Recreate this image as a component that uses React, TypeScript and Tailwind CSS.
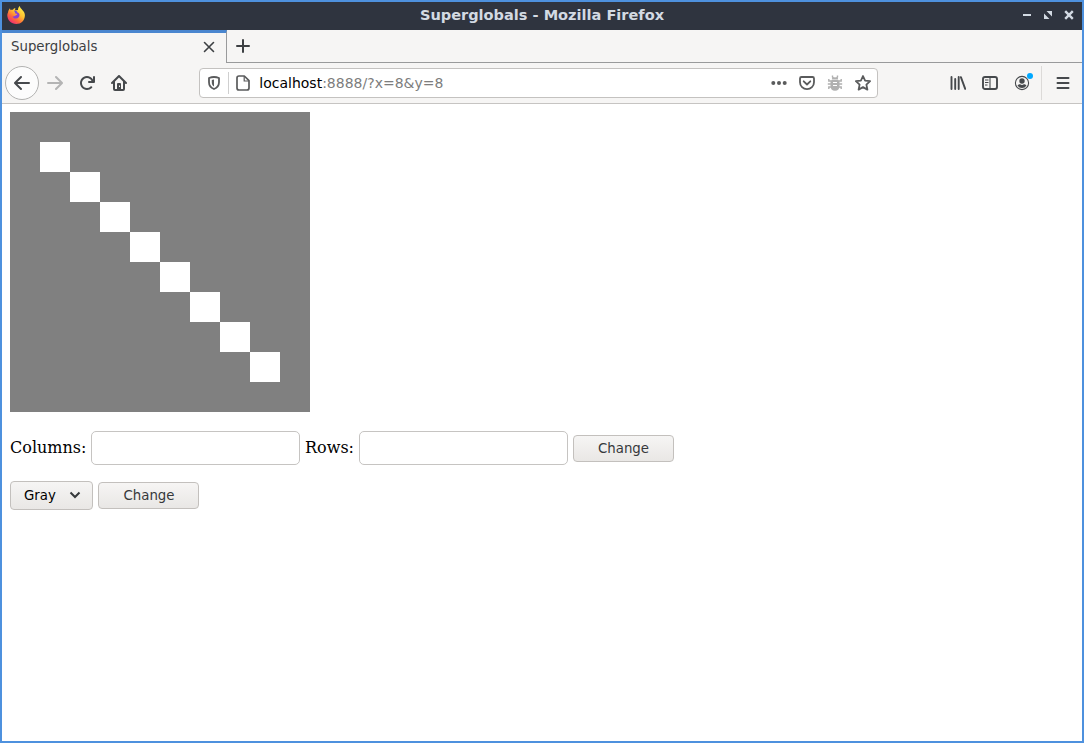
import type { ReactNode } from "react";

function Icon({ children, className = "" }: { children: ReactNode; className?: string }) {
  return (
    <svg viewBox="0 0 16 16" className={`h-4 w-4 shrink-0 ${className}`} fill="currentColor">
      {children}
    </svg>
  );
}

const ARROW =
  "M15 7H3.414l4.293-4.293a1 1 0 0 0-1.414-1.414l-6 6a1 1 0 0 0 0 1.414l6 6a1 1 0 0 0 1.414-1.414L3.414 9H15a1 1 0 0 0 0-2z";

function FirefoxLogo() {
  return (
    <svg viewBox="0 0 18 18" className="h-[18px] w-[18px]">
      <defs>
        <linearGradient id="flame" x1="0.85" y1="0.05" x2="0.2" y2="0.95">
          <stop offset="0" stopColor="#fff04a" />
          <stop offset="0.4" stopColor="#ffc030" />
          <stop offset="0.7" stopColor="#ff6a3a" />
          <stop offset="1" stopColor="#ee2a78" />
        </linearGradient>
      </defs>
      <path
        d="M1 6.400C1.300 4.500 2.200 3.200 3 2.300c0 .9.200 1.400.6 1.800C4.400 3.700 5.300 3.600 6 3.700 6.600 2.700 7.400 2.200 8.400 2c-.5.8-.5 1.500 0 2.200L11 4C10.900 2.300 11.700 1 12.800 0c.2 1.800 1.600 2.600 2.500 3.900C17 5.600 18 7.300 17.900 9.500 17.700 14.500 14 18 9.300 18 4.200 18 .4 14.300.3 9.300.3 8.200.6 7.200 1 6.400z"
        fill="url(#flame)"
      />
      <path d="M8.200 6.200C9.500 5.400 12 6.300 12.500 8.600c.4 2.300-1.300 4-3.500 4-1.700 0-3-.9-3.500-2.400 1 .5 1.900.2 2.700-.4.900-.5 1.700-.8 2.100-1.500.1-.5-1.800-.5-2.300-.8z" fill="#8a3fd8" />
      <path d="M7 4.600c1.500-.2 2.500.2 3.300 1.300L8.500 7C7.800 6.400 7.300 5.500 7 4.600z" fill="#6a4be0" />
    </svg>
  );
}

function TitleBar() {
  return (
    <header className="grid h-7 grid-cols-[1fr_auto_1fr] items-center bg-[#2f343f] pl-[5px] pr-2 text-[#d3dae3]">
      <div className="pb-[2px]"><FirefoxLogo /></div>
      <h1 className="pb-[3px] pl-[3px] text-[14.550px] font-bold leading-5">Superglobals - Mozilla Firefox</h1>
      <div className="flex items-center justify-end gap-[11px] pb-[2px]">
        <svg viewBox="0 0 10 10" className="h-[10px] w-[10px]"><path d="M1 4h8v2H1z" fill="currentColor" /></svg>
        <svg viewBox="0 0 10 10" className="h-[10px] w-[10px]"><path d="M3.500 1H9v5.500zM1 3.500V9h5.500z" fill="currentColor" /></svg>
        <svg viewBox="0 0 10 10" className="h-[10px] w-[10px]"><path d="M1.200 1.200l7.600 7.600m0-7.600l-7.600 7.600" stroke="currentColor" strokeWidth="2.400" /></svg>
      </div>
    </header>
  );
}

function TabStrip() {
  return (
    <div className="flex h-[33px] shrink-0 text-[#3d4043]">
      <div className="flex w-[225px] items-center border-r border-t-[3px] border-r-[#999a9b] border-t-[#4a86cf] pl-[9px] pr-[11px]">
        <span className="flex-1 pb-[2px] text-[13.333px]">Superglobals</span>
        <svg viewBox="0 0 12 12" className="mb-[3px] h-3 w-3"><path d="M1.500 1.500l9 9m0-9l-9 9" stroke="currentColor" strokeWidth="1.600" strokeLinecap="round" /></svg>
      </div>
      <div className="flex flex-1 items-center border-b border-[#999a9b] pl-2">
        <svg viewBox="0 0 16 16" className="h-4 w-4"><path d="M8 2v12M2 8h12" stroke="currentColor" strokeWidth="2" strokeLinecap="round" /></svg>
      </div>
    </div>
  );
}

function AddressBar() {
  return (
    <div className="ml-[72px] flex h-[30px] w-[679px] items-center rounded border border-[#c4c2c0] bg-white px-[6px] text-[#5a5b5c]">
      <Icon>
        <path d="M8 2c1.600 0 3.500.4 5 1v4.200c0 3-1.800 5.500-5 6.800-3.200-1.300-5-3.800-5-6.800V3c1.500-.6 3.400-1 5-1z" fill="none" stroke="currentColor" strokeWidth="1.800" strokeLinejoin="round" />
        <path d="M8 4.500v7C6.300 10.400 5.800 9 5.800 7.200V5C6.400 4.700 7.200 4.500 8 4.500z" />
      </Icon>
      <span className="ml-[6px] h-[22px] w-px bg-[#cfcfcf]" />
      <Icon className="ml-[6px]">
        <path d="M9.300 1H4a2 2 0 0 0-2 2v10a2 2 0 0 0 2 2h8a2 2 0 0 0 2-2V5.700z" fill="none" stroke="currentColor" strokeWidth="1.700" strokeLinejoin="round" />
        <path d="M9.200 1v5H14" fill="none" stroke="currentColor" strokeWidth="1.200" />
      </Icon>
      <span className="ml-2 flex-1 whitespace-nowrap pl-[0.3px] text-[14px] leading-5 text-[#7d7d7d]"><span className="text-black">localhost</span>:8888/?x=8&amp;y=8</span>
      <div className="flex gap-3">
        <Icon><circle cx="2.300" cy="8" r="2" /><circle cx="8" cy="8" r="2" /><circle cx="13.700" cy="8" r="2" /></Icon>
        <Icon>
          <path d="M2.500 2h11A1.500 1.500 0 0 1 15 3.500V7.200a7 7 0 0 1-14 0V3.500A1.500 1.500 0 0 1 2.500 2z" fill="none" stroke="currentColor" strokeWidth="1.800" />
          <path d="M4.700 6.300L8 9.500l3.300-3.200" fill="none" stroke="currentColor" strokeWidth="1.800" strokeLinecap="round" strokeLinejoin="round" />
        </Icon>
        <Icon className="text-[#b0b0b0]">
          <path d="M4.800 4.400C4.800 3 6 2.200 8 2.200s3.200.8 3.200 2.200z" />
          <path d="M5.500.5v1.500l1 1.200M10.500.5v1.500l-1 1.200M1.800 4v2h2.700M14.200 4v2h-2.700M.8 9h14.400M4.500 12H1.800v2M11.500 12h2.700v2" fill="none" stroke="currentColor" strokeWidth="1.400" />
          <path d="M3.500 6.500A1.500 1.500 0 0 1 5 5h6a1.500 1.500 0 0 1 1.500 1.500V11c0 3-1.500 4.800-4.500 4.800S3.500 14 3.500 11z" />
          <path d="M6 7.500h4M6 10.500h4" stroke="white" strokeWidth="1" />
        </Icon>
        <Icon>
          <path d="M8 1l2.100 4.600 5 .6-3.700 3.400 1 5L8 12.100l-4.400 2.500 1-5L.9 6.200l5-.6z" fill="none" stroke="currentColor" strokeWidth="1.800" strokeLinejoin="round" />
        </Icon>
      </div>
    </div>
  );
}

function Toolbar() {
  return (
    <nav className="flex h-[41px] shrink-0 items-center border-b border-[#c6c4c2] pl-[3px] pr-[11px] text-[#46494c]">
      <span className="flex h-[34px] w-[34px] items-center justify-center rounded-full border border-[#b2b2b1] bg-[#fcfcfc]">
        <Icon><path d={ARROW} /></Icon>
      </span>
      <Icon className="ml-2 rotate-180 text-[#b4b4b4]"><path d={ARROW} /></Icon>
      <Icon className="ml-4">
        <path d="M15 1a1 1 0 0 0-1 1v2.418A6.995 6.995 0 1 0 8 15a6.954 6.954 0 0 0 4.950-2.050 1 1 0 0 0-1.414-1.414A5.019 5.019 0 1 1 12.549 6H10a1 1 0 0 0 0 2h5a1 1 0 0 0 1-1V2a1 1 0 0 0-1-1z" />
      </Icon>
      <Icon className="ml-4">
        <path fillRule="evenodd" d="M15.707 7.293l-7-7a1 1 0 0 0-1.414 0l-7 7a1 1 0 0 0 1.414 1.414L2 8.414V14a2 2 0 0 0 2 2h8a2 2 0 0 0 2-2V8.414l.293.293a1 1 0 0 0 1.414-1.414zM12 14h-2v-3a1 1 0 0 0-1-1H7a1 1 0 0 0-1 1v3H4V6.414l4-4 4 4z" />
        <path d="M6 9a1 1 0 0 1 1-1h2a1 1 0 0 1 1 1v6H6z" />
        <path d="M8 10.500h1v1.500H8z" fill="#f6f5f4" />
      </Icon>
      <AddressBar />
      <div className="ml-auto flex items-center">
        <Icon><path d="M1.500 2v12M5.200 4v10M8.700 2v12M10.900 2.200l4.300 11.600" fill="none" stroke="currentColor" strokeWidth="1.900" strokeLinecap="round" /></Icon>
        <Icon className="ml-4">
          <rect x="1" y="2" width="14" height="12" rx="2" fill="none" stroke="currentColor" strokeWidth="1.900" />
          <path d="M8 2v12M3 5h3.500M3 7.500h3.500M3 10h2.500" fill="none" stroke="currentColor" strokeWidth="1.100" />
        </Icon>
        <div className="relative ml-4 h-4 w-4">
          <Icon>
            <circle cx="8" cy="8" r="6.600" fill="none" stroke="currentColor" strokeWidth="1.100" />
            <circle cx="8" cy="6" r="2.700" />
            <path d="M3.500 10.500c.7-.9 1.600-1.200 2.700-1.200.9.800 2.700.8 3.600 0 1.100 0 2 .3 2.700 1.200A5.200 5.200 0 0 1 8 13.100a5.200 5.200 0 0 1-4.500-2.600z" />
          </Icon>
          <span className="absolute -right-[3px] -top-[2px] h-[6px] w-[6px] rounded-full bg-[#00a8ff]" />
        </div>
        <span className="ml-[11px] h-[34px] w-px bg-[#dcdad8]" />
        <Icon className="ml-[13px]"><path d="M2.500 3h11M2.500 8h11M2.500 13h11" stroke="currentColor" strokeWidth="2" strokeLinecap="round" /></Icon>
      </div>
    </nav>
  );
}

const SIZE = 10;

function Board() {
  const cells = Array.from({ length: SIZE * SIZE }, (_, i) => {
    const row = Math.floor(i / SIZE);
    return row === i % SIZE && row > 0 && row < SIZE - 1;
  });
  return (
    <div className="grid h-[300px] w-[300px] grid-cols-10">
      {cells.map((on, i) => (
        <div key={i} className={on ? "bg-white" : "bg-[#808080]"} />
      ))}
    </div>
  );
}

function ChangeButton({ className = "" }: { className?: string }) {
  return (
    <button className={`h-[27px] w-[101px] rounded border border-[#c3c0bd] bg-linear-to-b from-[#f6f5f4] to-[#e9e7e5] font-['DejaVu_Sans',sans-serif] text-[13.333px] leading-4 text-[#36393b] ${className}`}>
      Change
    </button>
  );
}

function NumberField({ label, className }: { label: string; className: string }) {
  return (
    <label className="flex items-center">
      <span className={`pb-px ${className}`}>{label}</span>
      <input className="h-[34px] w-[209px] rounded-[5px] border border-[#c6c4c2] bg-white px-2 outline-none" />
    </label>
  );
}

export default function App() {
  return (
    <div className="flex h-screen w-full flex-col overflow-hidden border-2 border-[#4e91de] bg-[#f6f5f4] font-['DejaVu_Sans',sans-serif]">
      <TitleBar />
      <TabStrip />
      <Toolbar />
      <main className="flex-1 bg-white p-2 font-['DejaVu_Serif',serif] text-base text-black">
        <Board />
        <div className="mt-[19px] flex items-center gap-[5px]">
          <NumberField label="Columns:" className="w-[81px]" />
          <NumberField label="Rows:" className="w-[54px]" />
          <div className="pt-px"><ChangeButton /></div>
        </div>
        <div className="mt-4 flex items-center gap-[5px]">
          <button className="flex h-[29px] w-[83px] items-center justify-between rounded border border-[#c3c0bd] bg-linear-to-b from-[#f6f5f4] to-[#e9e7e5] pl-[13px] pr-[11px] font-['DejaVu_Sans',sans-serif] text-[13.333px] leading-4 text-black">
            Gray
            <svg viewBox="0 0 12 8" className="mb-px h-2 w-3"><path d="M1.500 1.500L6 6l4.500-4.500" fill="none" stroke="#36393b" strokeWidth="2" /></svg>
          </button>
          <ChangeButton className="pl-px" />
        </div>
      </main>
    </div>
  );
}
